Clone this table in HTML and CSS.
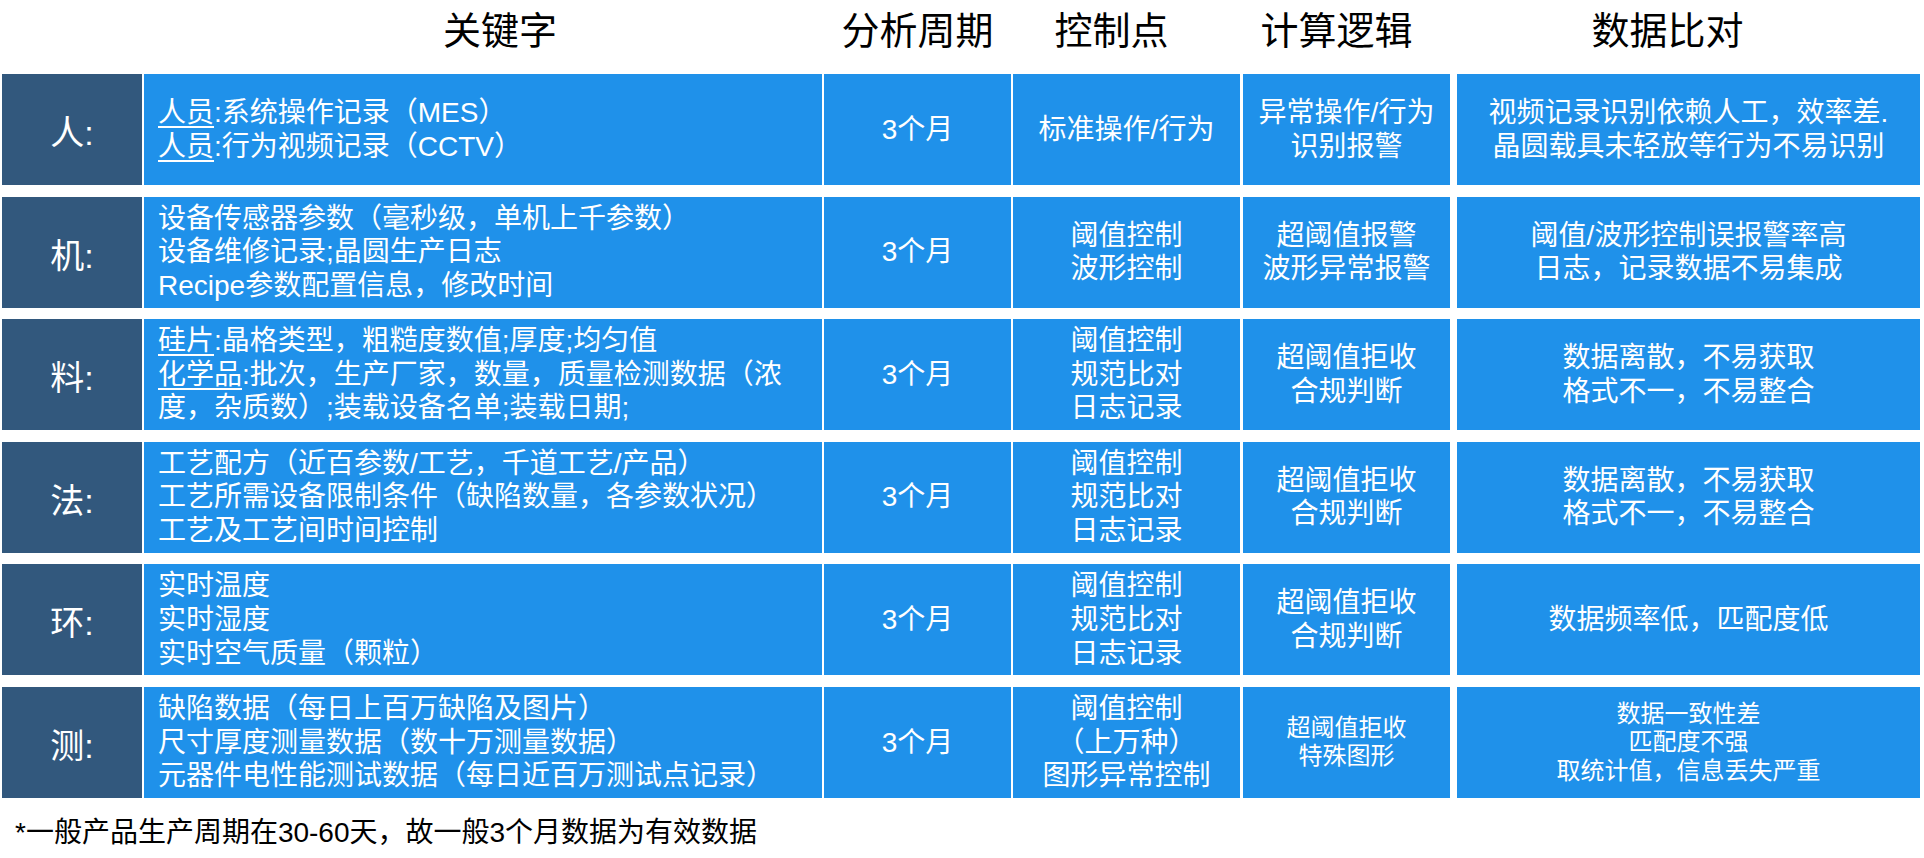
FILE: index.html
```html
<!DOCTYPE html>
<html lang="zh-CN">
<head>
<meta charset="utf-8">
<title>数据分析</title>
<link rel="stylesheet" href="styles.css">
</head>
<body>
<div class="page">
  <div class="grid head">
    <div class="h"></div>
    <div class="h h-kw">关键字</div>
    <div class="h">分析周期</div>
    <div class="h h-ctl">控制点</div>
    <div class="h h-logic">计算逻辑</div>
    <div class="h h-cmp">数据比对</div>
  </div>

  <div class="rows">
    <div class="grid row">
      <div class="label">人:</div>
      <div class="cell kw"><span><u>人员</u>:系统操作记录（MES）<br><u>人员</u>:行为视频记录（CCTV）</span></div>
      <div class="cell">3个月</div>
      <div class="cell">标准操作/行为</div>
      <div class="cell logic">异常操作/行为<br>识别报警</div>
      <div class="cell cmp">视频记录识别依赖人工，效率差.<br>晶圆载具未轻放等行为不易识别</div>
    </div>

    <div class="grid row">
      <div class="label">机:</div>
      <div class="cell kw"><span>设备传感器参数（毫秒级，单机上千参数）<br>设备维修记录;晶圆生产日志<br>Recipe参数配置信息，修改时间</span></div>
      <div class="cell">3个月</div>
      <div class="cell">阈值控制<br>波形控制</div>
      <div class="cell logic">超阈值报警<br>波形异常报警</div>
      <div class="cell cmp">阈值/波形控制误报警率高<br>日志，记录数据不易集成</div>
    </div>

    <div class="grid row">
      <div class="label">料:</div>
      <div class="cell kw"><span><u>硅片</u>:晶格类型，粗糙度数值;厚度;均匀值<br><u>化学品</u>:批次，生产厂家，数量，质量检测数据（浓<br>度，杂质数）;装载设备名单;装载日期;</span></div>
      <div class="cell">3个月</div>
      <div class="cell">阈值控制<br>规范比对<br>日志记录</div>
      <div class="cell logic">超阈值拒收<br>合规判断</div>
      <div class="cell cmp">数据离散，不易获取<br>格式不一，不易整合</div>
    </div>

    <div class="grid row">
      <div class="label">法:</div>
      <div class="cell kw"><span>工艺配方（近百参数/工艺，千道工艺/产品）<br>工艺所需设备限制条件（缺陷数量，各参数状况）<br>工艺及工艺间时间控制</span></div>
      <div class="cell">3个月</div>
      <div class="cell">阈值控制<br>规范比对<br>日志记录</div>
      <div class="cell logic">超阈值拒收<br>合规判断</div>
      <div class="cell cmp">数据离散，不易获取<br>格式不一，不易整合</div>
    </div>

    <div class="grid row">
      <div class="label">环:</div>
      <div class="cell kw"><span>实时温度<br>实时湿度<br>实时空气质量（颗粒）</span></div>
      <div class="cell">3个月</div>
      <div class="cell">阈值控制<br>规范比对<br>日志记录</div>
      <div class="cell logic">超阈值拒收<br>合规判断</div>
      <div class="cell cmp">数据频率低，匹配度低</div>
    </div>

    <div class="grid row">
      <div class="label">测:</div>
      <div class="cell kw"><span>缺陷数据（每日上百万缺陷及图片）<br>尺寸厚度测量数据（数十万测量数据）<br>元器件电性能测试数据（每日近百万测试点记录）</span></div>
      <div class="cell">3个月</div>
      <div class="cell">阈值控制<br>（上万种）<br>图形异常控制</div>
      <div class="cell logic small">超阈值拒收<br>特殊图形</div>
      <div class="cell cmp small">数据一致性差<br>匹配度不强<br>取统计值，信息丢失严重</div>
    </div>
  </div>

  <div class="footer">*一般产品生产周期在30-60天，故一般3个月数据为有效数据</div>
</div>
</body>
</html>
```

FILE: styles.css
```css
html, body {
  margin: 0;
  padding: 0;
  background: #ffffff;
}

body {
  width: 1924px;
  height: 858px;
  overflow: hidden;
  font-family: "Liberation Sans", "Noto Sans CJK SC", sans-serif;
}

.page {
  padding-left: 2px;
  width: 1918px;
}

.grid {
  display: grid;
  grid-template-columns: 140px 678px 187px 227px 208px 468px;
  column-gap: 2px;
}

.head {
  height: 62px;
  align-items: center;
}

.h {
  font-size: 38px;
  color: #000000;
  text-align: center;
  line-height: 1;
}

.h-kw { padding-left: 34px; }
.h-ctl { padding-right: 30px; }
.h-logic { padding-right: 20px; margin-left: 1px; }
.h-cmp { padding-right: 42px; margin-left: 5px; }

.rows {
  margin-top: 12px;
  display: flex;
  flex-direction: column;
  gap: 11.6px;
}

.row {
  height: 111px;
}

.label {
  background: #32587d;
  color: #ffffff;
  font-size: 34px;
  display: flex;
  align-items: center;
  justify-content: center;
  padding-top: 2px;
  box-sizing: border-box;
}

.cell {
  background: #1f91ea;
  color: #ffffff;
  font-size: 28px;
  line-height: 33.6px;
  display: flex;
  align-items: center;
  justify-content: center;
  text-align: center;
  white-space: nowrap;
}

.cell.kw {
  justify-content: flex-start;
  text-align: left;
  padding-left: 14px;
}

.cell.logic { margin-left: 1px; }
.cell.cmp { margin-left: 5px; }

.cell.small {
  font-size: 24px;
  line-height: 28.5px;
}

.cell u {
  text-decoration: underline;
  text-decoration-thickness: 2px;
  text-underline-offset: 4px;
}

.footer {
  margin-top: 18px;
  padding-left: 13px;
  font-size: 28px;
  line-height: 34px;
  color: #000000;
}
```
